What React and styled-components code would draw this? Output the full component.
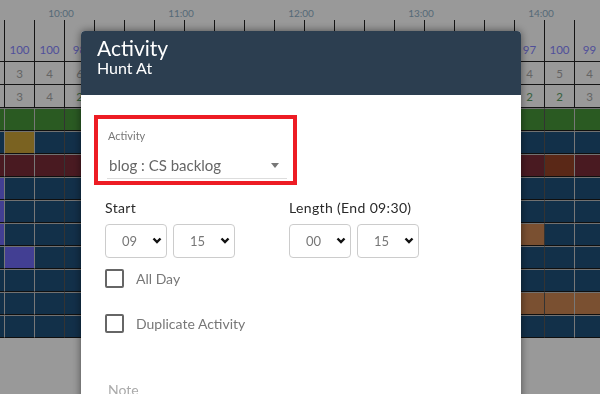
import styled, { createGlobalStyle } from 'styled-components';

const GlobalStyle = createGlobalStyle`
  html, body {
    margin: 0;
    padding: 0;
    overflow: hidden;
    background: #fff;
    font-family: Lato, "Open Sans", sans-serif;
  }
`;

const Page = styled.div`
  width: 600px;
  height: 394px;
  overflow: hidden;
  background: #fff;
`;

const HourRow = styled.div`
  display: flex;
  height: 20px;
  padding-left: 1px;
`;

const HourLabel = styled.div`
  flex: 0 0 120px;
  text-align: center;
  font-size: 10px;
  line-height: 12px;
  padding-top: 7px;
  color: #8fb0c8;
`;

const Grid = styled.div`
  margin-left: -26px;
  width: 630px;
`;

const GridRow = styled.div`
  display: flex;
`;

const TickCell = styled.div`
  flex: 0 0 30px;
  box-sizing: border-box;
  height: 18px;
  border-left: 1px solid #222;
`;

const NumCell = styled.div`
  flex: 0 0 30px;
  box-sizing: border-box;
  height: ${(p) => p.$h}px;
  border-left: 1px solid #222;
  border-bottom: 1px solid #222;
  display: flex;
  align-items: center;
  justify-content: center;
  font-size: 11.5px;
  color: ${(p) => p.$color};
`;

const ColorCell = styled.div`
  flex: 0 0 30px;
  box-sizing: border-box;
  height: 23px;
  background: ${(p) => p.$bg};
  border-left: 1px solid ${(p) => (p.$hour ? '#555' : '#c8c8c8')};
  border-top: 1px solid #bdbdbd;
  border-bottom: 1px solid #1a1a1a;
`;

const Overlay = styled.div`
  position: fixed;
  inset: 0;
  background: rgba(0, 0, 0, 0.4);
  display: flex;
  align-items: flex-start;
`;

const Modal = styled.div`
  margin: 31px 0 0 81px;
  width: 440px;
  height: 400px;
  background: #fff;
  border-radius: 4px 4px 0 0;
  box-shadow: 0 0 8px rgba(0, 0, 0, 0.5);
  overflow: hidden;
`;

const ModalHeader = styled.div`
  height: 64px;
  box-sizing: border-box;
  background: #2c3e50;
  color: #fff;
  padding: 6px 16px 0;
`;

const Title = styled.div`
  font-size: 21px;
  line-height: 22px;
`;

const Subtitle = styled.div`
  font-size: 16px;
  line-height: 18px;
`;

const ModalBody = styled.div`
  padding: 20px 24px;
`;

const Highlight = styled.div`
  margin-left: -11px;
  width: 203px;
  height: 70px;
  box-sizing: border-box;
  border: 4px solid #ed1c24;
  padding: 10px 6px 0 9px;
`;

const SmallLabel = styled.div`
  font-size: 11px;
  line-height: 14px;
  color: #777;
  padding-left: 1px;
`;

const SelectLine = styled.div`
  position: relative;
  margin-top: 9px;
  border-bottom: 1px solid #ddd;
`;

const LineSelect = styled.select`
  appearance: none;
  width: 100%;
  height: 26px;
  border: none;
  background: transparent;
  padding: 0 0 0 2px;
  font-family: inherit;
  font-size: 15px;
  color: #666;
  outline: none;
`;

const Caret = styled.span`
  position: absolute;
  right: 8px;
  top: 11px;
  width: 0;
  height: 0;
  border-left: 4.5px solid transparent;
  border-right: 4.5px solid transparent;
  border-top: 5px solid #777;
  pointer-events: none;
`;

const TimeRow = styled.div`
  display: grid;
  grid-template-columns: 184px 184px;
  margin-top: 15px;
`;

const FieldLabel = styled.div`
  font-size: 14px;
  line-height: 16px;
  letter-spacing: 0.35px;
  color: #2a2a2a;
`;

const SelectPair = styled.div`
  display: flex;
  gap: 6px;
  margin-top: 8px;
`;

const BoxWrap = styled.div`
  position: relative;
  width: 62px;
  height: 34px;
`;

const BoxSelect = styled.select`
  appearance: none;
  width: 100%;
  height: 100%;
  box-sizing: border-box;
  border: 1px solid #ccc;
  border-radius: 4px;
  background: #fff;
  padding: 0 0 0 16px;
  font-family: inherit;
  font-size: 13px;
  color: #777;
  outline: none;
`;

const Chevron = styled.svg`
  position: absolute;
  right: 5px;
  top: 13px;
  pointer-events: none;
`;

const CheckRow = styled.label`
  display: flex;
  align-items: center;
  gap: 12px;
  margin-top: ${(p) => p.$top}px;
  font-size: 14px;
  color: #777;
`;

const Check = styled.input`
  appearance: none;
  margin: 0;
  width: 19px;
  height: 19px;
  box-sizing: border-box;
  border: 2px solid #666;
  border-radius: 2px;
`;

const NoteLabel = styled.div`
  margin: 49px 0 0 3px;
  font-size: 14px;
  line-height: 16px;
  color: #aaa;
`;

const colors = {
  g: '#46963a',
  b: '#1f507b',
  r: '#7b2c38',
  y: '#cca338',
  p: '#6f6af5',
  o: '#cc8553',
  n: '#974427',
};

const fill = (c) => Array(21).fill(c);
const set = (arr, idx, c) => arr.map((v, i) => (idx.includes(i) ? c : v));

const colorRows = [
  fill('g'),
  set(fill('b'), [1], 'y'),
  set(fill('r'), [19], 'n'),
  set(fill('b'), [0], 'p'),
  set(fill('b'), [0], 'p'),
  set(set(fill('b'), [0], 'p'), [18], 'o'),
  set(fill('b'), [1], 'p'),
  fill('b'),
  set(fill('b'), [18, 19, 20], 'o'),
  fill('b'),
];

const capacity = [100, 100, 100, 98, 99, 100, 97, 98, 100, 99, 96, 100, 98, 97, 100, 99, 98, 100, 97, 100, 99];
const staff = [3, 3, 4, 6, 5, 4, 4, 5, 6, 5, 4, 4, 5, 5, 4, 4, 5, 4, 4, 5, 4];
const open = [3, 3, 4, 2, 3, 2, 2, 3, 2, 3, 2, 2, 3, 2, 2, 3, 2, 3, 2, 2, 3];

const hours = ['10:00', '11:00', '12:00', '13:00', '14:00'];

function BoxPicker({ value }) {
  return (
    <BoxWrap>
      <BoxSelect defaultValue={value}>
        <option>{value}</option>
      </BoxSelect>
      <Chevron width="10" height="7" viewBox="0 0 10 7">
        <path d="M1.5 1.5 L5 5 L8.5 1.5" fill="none" stroke="#111" strokeWidth="2.4" />
      </Chevron>
    </BoxWrap>
  );
}

export default function App() {
  return (
    <Page>
      <GlobalStyle />
      <HourRow>
        {hours.map((h) => (
          <HourLabel key={h}>{h}</HourLabel>
        ))}
      </HourRow>
      <Grid>
        <GridRow>
          {capacity.map((_, i) => (
            <TickCell key={i} />
          ))}
        </GridRow>
        <GridRow>
          {capacity.map((v, i) => (
            <NumCell key={i} $h={24} $color="#8585ff">{v}</NumCell>
          ))}
        </GridRow>
        <GridRow>
          {staff.map((v, i) => (
            <NumCell key={i} $h={23} $color="#a8a8a8">{v}</NumCell>
          ))}
        </GridRow>
        <GridRow>
          {open.map((v, i) => (
            <NumCell key={i} $h={23} $color={v === 2 ? '#5aa066' : '#a8a8a8'}>{v}</NumCell>
          ))}
        </GridRow>
        {colorRows.map((row, r) => (
          <GridRow key={r}>
            {row.map((c, i) => (
              <ColorCell key={i} $bg={colors[c]} $hour={i % 4 === 3} />
            ))}
          </GridRow>
        ))}
      </Grid>

      <Overlay>
        <Modal>
          <ModalHeader>
            <Title>Activity</Title>
            <Subtitle>Hunt At</Subtitle>
          </ModalHeader>
          <ModalBody>
            <Highlight>
              <SmallLabel>Activity</SmallLabel>
              <SelectLine>
                <LineSelect defaultValue="blog : CS backlog">
                  <option>blog : CS backlog</option>
                </LineSelect>
                <Caret />
              </SelectLine>
            </Highlight>

            <TimeRow>
              <div>
                <FieldLabel>Start</FieldLabel>
                <SelectPair>
                  <BoxPicker value="09" />
                  <BoxPicker value="15" />
                </SelectPair>
              </div>
              <div>
                <FieldLabel>Length (End 09:30)</FieldLabel>
                <SelectPair>
                  <BoxPicker value="00" />
                  <BoxPicker value="15" />
                </SelectPair>
              </div>
            </TimeRow>

            <CheckRow $top={11}>
              <Check type="checkbox" />
              All Day
            </CheckRow>
            <CheckRow $top={26}>
              <Check type="checkbox" />
              Duplicate Activity
            </CheckRow>

            <NoteLabel>Note</NoteLabel>
          </ModalBody>
        </Modal>
      </Overlay>
    </Page>
  );
}
